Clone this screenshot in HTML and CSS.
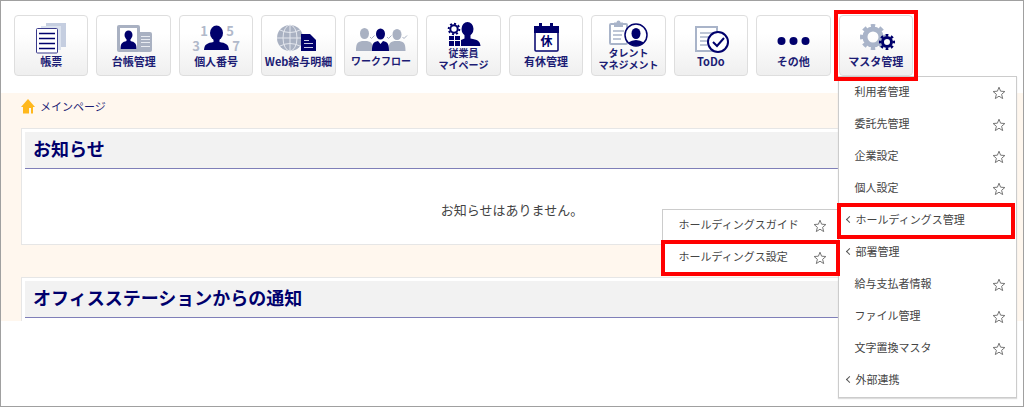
FILE: index.html
```html
<!DOCTYPE html>
<html lang="ja">
<head>
  <meta charset="UTF-8">
  <meta name="viewport" content="width=device-width, initial-scale=1.0">
  <title>メインページ</title>
  <link rel="stylesheet" href="styles.css">
</head>
<body>
  <svg class="defs" width="0" height="0" aria-hidden="true">
    <symbol id="star" viewBox="0 0 14 14">
      <path d="M7 1.2 8.6 5.2 12.9 5.5 9.6 8.3 10.7 12.6 7 10.2 3.3 12.6 4.4 8.3 1.1 5.5 5.4 5.2Z" fill="none" stroke="#777" />
    </symbol>
  </svg>

  <!-- メインメニュー -->
  <nav class="main-nav">
    <button class="nav-button">
      <svg class="icon" viewBox="0 0 56 34">
        <path class="pale" d="M23 3h20v24H23z" />
        <path d="M18 6h20v24H18z" fill="#dbe2ee" />
        <rect x="13.5" y="8.5" width="21" height="24.5" rx="1" fill="#fff" stroke="#3a3a8c" />
        <path class="line" d="M16 13.5h16M16 18.5h16M16 23.5h16M16 28.5h16" stroke-width="1.5" />
      </svg>
      <span>帳票</span>
    </button>
    <button class="nav-button">
      <svg class="icon" viewBox="0 0 56 34">
        <rect class="gray" x="11" y="5" width="23" height="27" rx="2" />
        <rect class="gray" x="32" y="12" width="14" height="20" rx="2" />
        <path class="white" d="M14 8h17v21H14z" />
        <ellipse class="navy" cx="22.5" cy="15" rx="4" ry="4.5" />
        <path class="navy" d="M20.5 18h4v3c4 1 6 2 6 8h-16c0-6 2-7 6-8z" />
        <path d="M35 16.5h9M35 19.5h9M35 22.5h9M35 26.5h9" stroke="#e8ebf1" />
      </svg>
      <span>台帳管理</span>
    </button>
    <button class="nav-button">
      <svg class="icon" viewBox="0 0 56 34">
        <g class="digits">
          <text x="16" y="16">1</text>
          <text x="42" y="16">5</text>
          <text x="8" y="31">3</text>
          <text x="48" y="31">7</text>
        </g>
        <ellipse class="navy" cx="28.5" cy="13" rx="6.5" ry="7.5" />
        <path class="navy" d="M25.5 18h6v4c6 1 9 2 9.5 8H16c.5-6 3.500-7 9.500-8z" />
      </svg>
      <span>個人番号</span>
    </button>
    <button class="nav-button">
      <svg class="icon" viewBox="0 0 56 34">
        <circle class="gray" cx="19" cy="18" r="13" />
        <path d="M19 5v26M6 18h26M9 10q10 5 20 0M9 26q10-5 20 0" fill="none" stroke="#e4e7ee" />
        <ellipse cx="19" cy="18" rx="7" ry="13" fill="none" stroke="#e4e7ee" />
        <path class="navy" d="M30 14h9l6 6v11H30z" />
        <path d="M33 20.5h5M33 23.5h9M33 27.5h9" stroke="#c9cce4" />
      </svg>
      <span>Web給与明細</span>
    </button>
    <button class="nav-button small">
      <svg class="icon" viewBox="0 0 56 34">
        <ellipse class="gray" cx="11.5" cy="13.5" rx="4.5" ry="5.5" />
        <ellipse class="gray" cx="44" cy="14.5" rx="4.5" ry="5.5" />
        <path class="gray" d="M3 31c0-7 1-9 6-10h5c5 1 6 3 6 10zM35.5 31c0-7 1-9 6-10h5c5 1 6 3 6 10z" />
        <path d="M17 17l1.500 1.500 3-3M34 17l1.500 1.500 3-3M49.500 17l1.500 1.500 3-3" fill="none" stroke="#a9b1c2" />
        <ellipse class="navy" cx="27.5" cy="14" rx="4.5" ry="5.5" />
        <path d="M24 20l3.500 5 3.500-5z" fill="#fff" />
        <path class="navy" d="M19 31c0-7 1-9 6-10l2.500 3 2.500-3c5 1 6 3 6 10z" />
      </svg>
      <span>ワークフロー</span>
    </button>
    <button class="nav-button double">
      <svg class="icon" viewBox="0 0 56 27">
        <circle class="line" cx="19" cy="9" r="3.7" stroke-width="2" />
        <circle class="line" cx="19" cy="9" r="5.3" stroke-width="2" pathLength="16" stroke-dasharray="1 1" />
        <path class="navy" d="M14 16h5v4h-5zM20 16h5v4h-5zM14 21h5v5h-5zM20 21h5v5h-5z" />
        <ellipse class="navy" cx="32.5" cy="9" rx="6" ry="7" />
        <path class="navy" d="M29.5 14h6v4.500c7 1 9.500 2.500 10 7.500H26v-6l3.500-1.500z" />
      </svg>
      <span>従業員<br>マイページ</span>
    </button>
    <button class="nav-button">
      <svg class="icon" viewBox="0 0 56 34">
        <rect x="17" y="7" width="23" height="24" rx="1" fill="#fff" stroke="#00006c" stroke-width="1.5" />
        <path class="navy" d="M16 6h25v7H16zM21 3h3v4h-3zM32 3h3v4h-3z" />
        <text class="holiday" x="28.5" y="26">休</text>
      </svg>
      <span>有休管理</span>
    </button>
    <button class="nav-button double">
      <svg class="icon" viewBox="0 0 56 27">
        <rect x="10" y="4" width="17" height="20" rx="1" fill="#fff" stroke="#a9b4c9" stroke-width="2" />
        <path d="M14 2.500h2.500a2 2 0 0 1 4 0H23V7h-9z" fill="#a9b4c9" />
        <path d="M13 11h11M13 15h9M13 19h8" stroke="#a9b4c9" stroke-width="1.5" />
        <circle cx="36" cy="15" r="11" fill="#fff" stroke="#00006c" stroke-width="1.5" />
        <ellipse class="navy" cx="36" cy="13.5" rx="4.5" ry="5.5" />
        <path class="navy" d="M28 22.500q8-5 16 0-8 7-16 0z" />
      </svg>
      <span>タレント<br>マネジメント</span>
    </button>
    <button class="nav-button">
      <svg class="icon" viewBox="0 0 56 34">
        <rect x="13" y="7" width="21" height="24" fill="#fff" stroke="#a9b4c9" stroke-width="2" />
        <path d="M17 13h13M17 17h10M17 21h8M17 25h7" stroke="#a9b4c9" stroke-width="1.5" />
        <circle cx="35" cy="22" r="10" fill="#fff" stroke="#00006c" stroke-width="2" />
        <path class="line" d="M30 22l4 4 7-8" stroke-width="2" />
      </svg>
      <span>ToDo</span>
    </button>
    <button class="nav-button">
      <svg class="icon" viewBox="0 0 56 34">
        <circle class="navy" cx="16.5" cy="21" r="4" />
        <circle class="navy" cx="28.5" cy="21" r="4" />
        <circle class="navy" cx="40.5" cy="21" r="4" />
      </svg>
      <span>その他</span>
    </button>
    <div class="nav-item highlight">
      <button class="nav-button">
        <svg class="icon" viewBox="0 0 56 34">
          <circle cx="25" cy="17" r="8" fill="none" stroke="#a9b4c9" stroke-width="5" />
          <circle cx="25" cy="17" r="11.5" fill="none" stroke="#a9b4c9" stroke-width="3" pathLength="16" stroke-dasharray="1 1" stroke-dashoffset=".5" />
          <circle class="line" cx="39" cy="22" r="4.5" stroke-width="3" />
          <circle class="line" cx="39" cy="22" r="6.8" stroke-width="2.5" pathLength="16" stroke-dasharray="1 1" stroke-dashoffset=".5" />
        </svg>
        <span>マスタ管理</span>
      </button>

      <!-- マスタ管理のドロップダウン -->
      <ul class="menu">
        <li><a href="#">利用者管理</a><button class="fav" aria-label="お気に入り"><svg><use href="#star" /></svg></button></li>
        <li><a href="#">委託先管理</a><button class="fav" aria-label="お気に入り"><svg><use href="#star" /></svg></button></li>
        <li><a href="#">企業設定</a><button class="fav" aria-label="お気に入り"><svg><use href="#star" /></svg></button></li>
        <li><a href="#">個人設定</a><button class="fav" aria-label="お気に入り"><svg><use href="#star" /></svg></button></li>
        <li class="parent highlight">
          <a href="#">ホールディングス管理</a>
          <ul class="submenu">
            <li><a href="#">ホールディングスガイド</a><button class="fav" aria-label="お気に入り"><svg><use href="#star" /></svg></button></li>
            <li class="highlight"><a href="#">ホールディングス設定</a><button class="fav" aria-label="お気に入り"><svg><use href="#star" /></svg></button></li>
          </ul>
        </li>
        <li class="parent"><a href="#">部署管理</a></li>
        <li><a href="#">給与支払者情報</a><button class="fav" aria-label="お気に入り"><svg><use href="#star" /></svg></button></li>
        <li><a href="#">ファイル管理</a><button class="fav" aria-label="お気に入り"><svg><use href="#star" /></svg></button></li>
        <li><a href="#">文字置換マスタ</a><button class="fav" aria-label="お気に入り"><svg><use href="#star" /></svg></button></li>
        <li class="parent"><a href="#">外部連携</a></li>
      </ul>
    </div>
  </nav>

  <main class="content">
    <a class="breadcrumb" href="#">
      <svg class="home" viewBox="0 0 14 15">
        <path d="M7 0l7 8h-2v6.500H10V9H8v5.500H2V8H0z" fill="#ffb81c" />
      </svg>
      メインページ
    </a>
    <section class="panel">
      <h2>お知らせ</h2>
      <p>お知らせはありません。</p>
    </section>
    <section class="panel open">
      <h2>オフィスステーションからの通知</h2>
    </section>
  </main>
</body>
</html>
```
FILE: styles.css
```css
* {
  box-sizing: border-box;
}
body {
  margin: 0;
  min-height: 100vh;
  border: 1px solid #a0a0a0;
  background: #fff;
  color: #444;
  font-family: "Noto Sans CJK JP", sans-serif;
  font-size: 11px;
}
a {
  color: inherit;
  text-decoration: none;
}
button {
  font-family: inherit;
  cursor: pointer;
}
ul {
  list-style: none;
  margin: 0;
  padding: 0;
}
.defs {
  position: absolute;
}

/* メインメニュー */
.main-nav {
  display: grid;
  grid-template-columns: repeat(11, 1fr);
  gap: 8px;
  padding: 14px 110px 17px 13px;
}
.nav-item {
  position: relative;
}
.nav-button {
  display: flex;
  flex-direction: column;
  align-items: center;
  width: 100%;
  height: 61px;
  padding: 4px 0 0;
  border: 1px solid #dedede;
  border-radius: 4px;
  background: linear-gradient(#fff 30%, #efefef);
  color: #1c1c74;
  font-size: 11px;
  font-weight: 700;
  line-height: 14px;
  white-space: nowrap;
}
.nav-button.small {
  font-size: 10px;
}
.nav-button.double {
  font-size: 10px;
  line-height: 12px;
}
.icon {
  flex: none;
  width: 56px;
  height: 34px;
}
.double .icon {
  height: 27px;
}
.navy {
  fill: #00006c;
}
.gray {
  fill: #a9b1c2;
}
.pale {
  fill: #c5cee0;
}
.white {
  fill: #fff;
}
.line {
  fill: none;
  stroke: #00006c;
}
.digits {
  fill: #b1b9ca;
  font-size: 13px;
  text-anchor: middle;
}
.holiday {
  fill: #00006c;
  font-size: 12px;
  text-anchor: middle;
}

/* 赤枠 */
.highlight::after {
  content: "";
  position: absolute;
  inset: -2px;
  z-index: 3;
  border: 4px solid #f00;
  pointer-events: none;
}
.nav-item.highlight::after {
  inset: -5px;
}

/* ドロップダウン */
.menu,
.submenu {
  position: absolute;
  border: 1px solid #ccc;
  background: #fff;
}
.menu {
  top: 100%;
  left: -1px;
  z-index: 2;
  width: 179px;
  padding-right: 3px;
  box-shadow: 0 1px 1px #ddd;
}
.submenu {
  top: 4px;
  right: 100%;
  width: 177px;
}
.menu li {
  position: relative;
  display: flex;
  align-items: center;
  justify-content: space-between;
  height: 32px;
  padding: 0 7px 0 16px;
}
.menu a {
  padding-bottom: 4px;
  white-space: nowrap;
}
.menu .parent {
  justify-content: flex-start;
  gap: 4px;
  padding-left: 8px;
}
.parent::before {
  content: "";
  width: 4px;
  height: 4px;
  margin-bottom: 3px;
  border-left: 1px solid #555;
  border-bottom: 1px solid #555;
  transform: rotate(45deg);
}
.fav {
  display: flex;
  padding: 0;
  border: 0;
  background: none;
}
.fav svg {
  width: 14px;
  height: 14px;
}
.submenu .fav {
  margin-right: 4px;
}

/* 本文 */
.content {
  padding: 5px 20px 0;
  background: #fff7ee;
}
.breadcrumb {
  display: inline-flex;
  align-items: center;
  gap: 5px;
  height: 16px;
  margin-bottom: 14px;
  color: #1c1c74;
}
.home {
  width: 14px;
  height: 15px;
}
.panel {
  margin-bottom: 32px;
  padding: 3px;
  border: 1px solid #e6e6e6;
  background: #fff;
}
.panel.open {
  margin-bottom: 0;
  border-bottom: 0;
}
.panel h2 {
  margin: 0;
  padding: 0 8px 4px;
  border-bottom: 1px solid #7f7fb8;
  background: #f2f2f2;
  color: #00006c;
  font-size: 18px;
  line-height: 32px;
}
.panel p {
  margin: 0;
  padding: 31px 0 21px;
  font-size: 13px;
  line-height: 20px;
  text-align: center;
}
```
